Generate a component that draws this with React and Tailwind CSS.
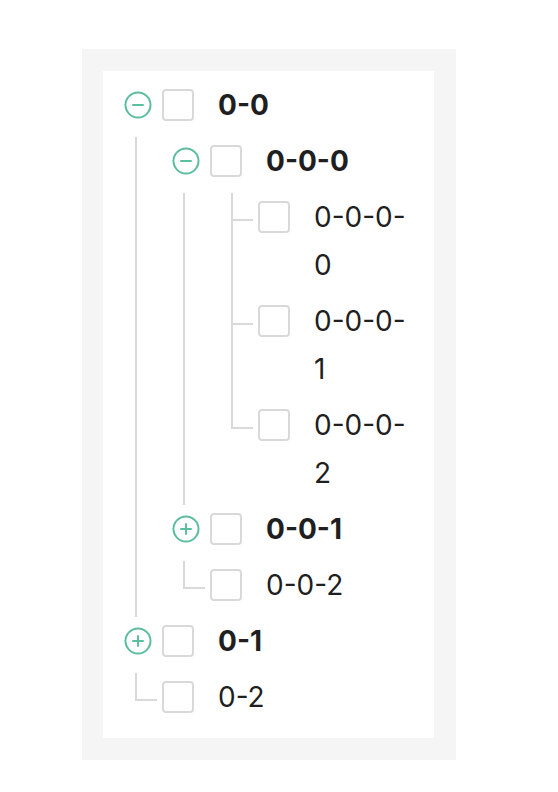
import React from 'react';

const tree = [
  { key: '0-0', title: '0-0', bold: true, open: true, indent: [], kind: 'open' },
  { key: '0-0-0', title: '0-0-0', bold: true, indent: [true], kind: 'open' },
  { key: '0-0-0-0', title: '0-0-0-0', indent: [true, true], kind: 'leaf' },
  { key: '0-0-0-1', title: '0-0-0-1', indent: [true, true], kind: 'leaf' },
  { key: '0-0-0-2', title: '0-0-0-2', indent: [true, true], kind: 'leaf-last' },
  { key: '0-0-1', title: '0-0-1', bold: true, indent: [true], kind: 'closed' },
  { key: '0-0-2', title: '0-0-2', indent: [true], kind: 'leaf-last' },
  { key: '0-1', title: '0-1', bold: true, indent: [], kind: 'closed' },
  { key: '0-2', title: '0-2', indent: [], kind: 'leaf-last' },
];

const SwitchIcon = ({ open }) => (
  <svg width="28" height="28" viewBox="0 0 28 28" fill="none" stroke="#5cbea0" strokeWidth="2" strokeLinecap="round">
    <circle cx="14" cy="14" r="12.5" />
    <line x1="9" y1="14" x2="19" y2="14" />
    {!open && <line x1="14" y1="9" x2="14" y2="19" />}
  </svg>
);

const Switcher = ({ kind }) => {
  if (kind === 'open' || kind === 'closed') {
    return (
      <div className="w-[48px] h-[48px] shrink-0 flex items-center justify-center">
        <SwitchIcon open={kind === 'open'} />
      </div>
    );
  }
  if (kind === 'leaf-last') {
    return (
      <div className="w-[48px] shrink-0">
        <div className="ml-[21px] w-[22px] h-[28px] border-l-2 border-b-2 border-[#d9d9d9]" />
      </div>
    );
  }
  return (
    <div className="w-[48px] shrink-0 flex">
      <div className="ml-[21px] w-[2px] bg-[#d9d9d9]" />
      <div className="w-[20px] h-[28px] border-b-2 border-[#d9d9d9]" />
    </div>
  );
};

const TreeRow = ({ node }) => (
  <div className="flex items-stretch">
    {node.indent.map((line, i) => (
      <div key={i} className="w-[48px] shrink-0">
        {line && <div className="w-[23px] h-full border-r-2 border-[#d9d9d9]" />}
      </div>
    ))}
    <Switcher kind={node.kind} />
    <div className="shrink-0 mt-[8px] mr-[16px] w-[32px] h-[32px] rounded-[4px] border-2 border-[#d9d9d9] bg-white" />
    <span
      className={`px-[8px] pb-[8px] leading-[48px] text-[28px] text-[#1f1f1f] ${node.bold ? 'font-bold' : 'font-normal'}`}
    >
      {node.title}
    </span>
  </div>
);

export default function App() {
  return (
    <div className="font-['Inter',sans-serif] pt-[49px]">
      <div className="ml-[82px] w-[374px] bg-[#f5f5f5] p-[22px] pl-[21px]">
        <div className="bg-white pl-[11px] pr-[10px] pt-[10px] pb-[9px]">
          {tree.map((node) => (
            <TreeRow key={node.key} node={node} />
          ))}
        </div>
      </div>
    </div>
  );
}
